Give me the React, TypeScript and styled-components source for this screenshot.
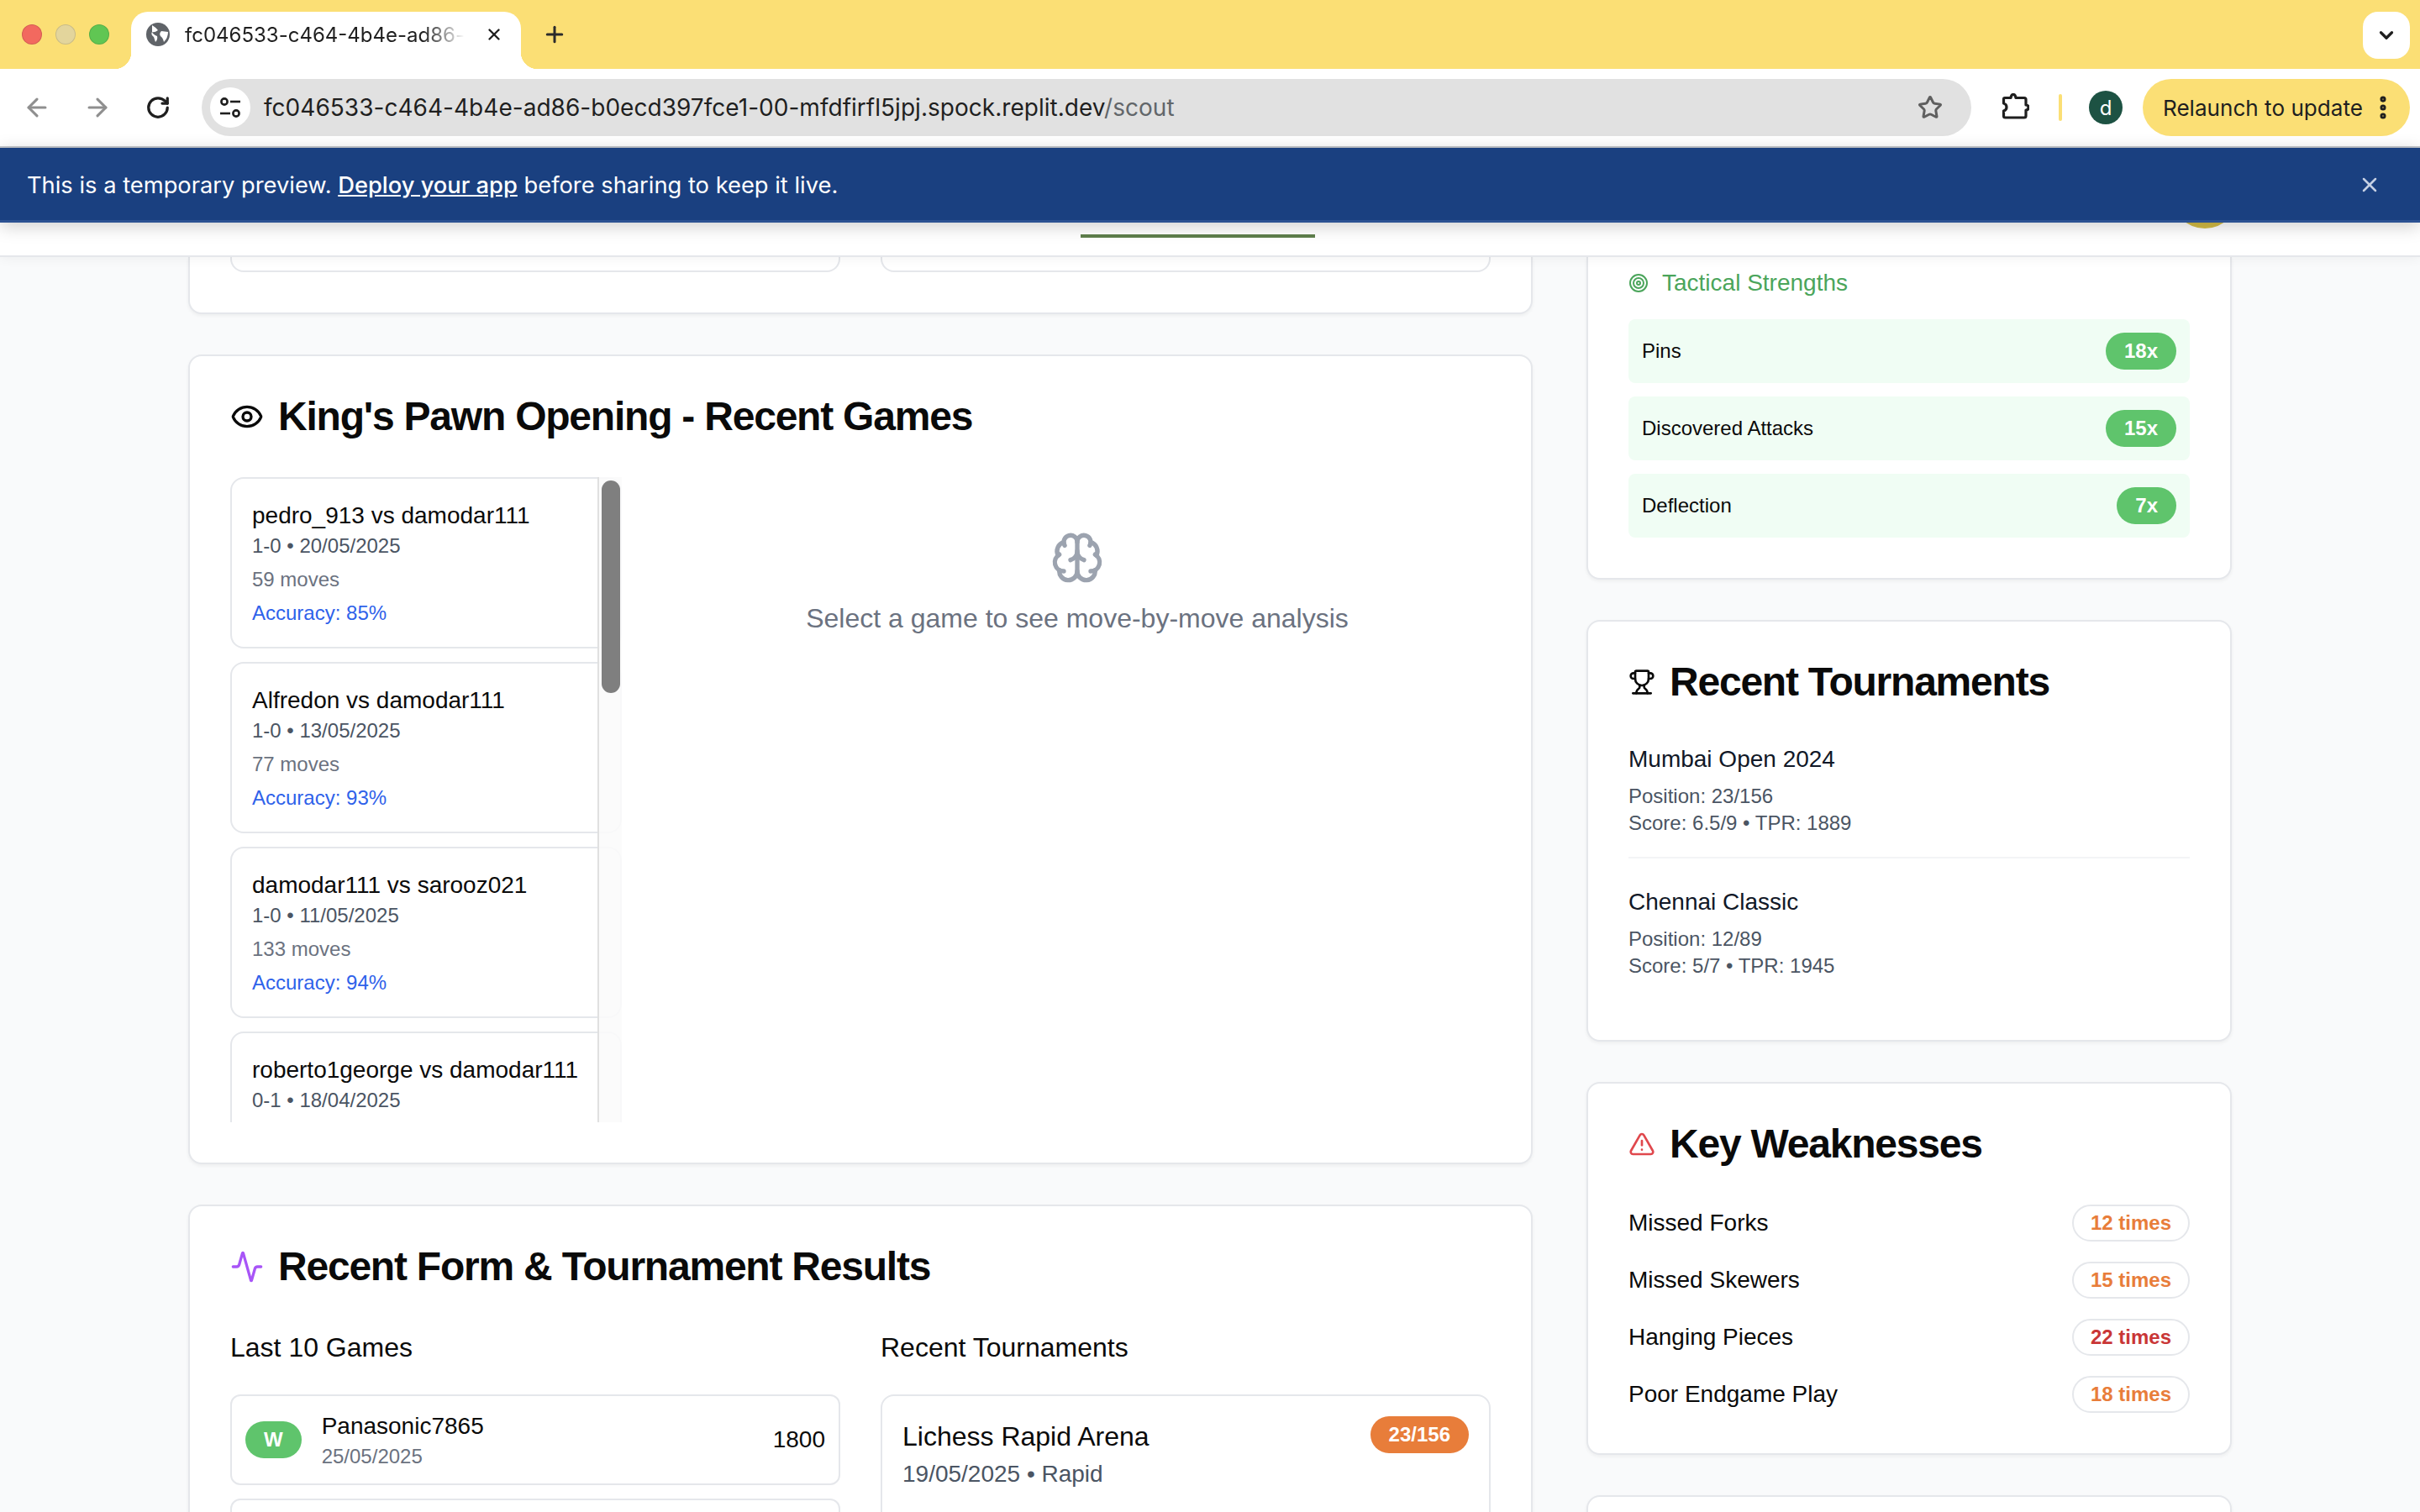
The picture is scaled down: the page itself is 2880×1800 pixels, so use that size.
import * as React from 'react';
import styled, { createGlobalStyle } from 'styled-components';
import {
  Activity,
  ArrowLeft,
  ArrowRight,
  Brain,
  ChevronDown,
  EllipsisVertical,
  Eye,
  Plus,
  RotateCw,
  Star,
  Target,
  TriangleAlert,
  Trophy,
  X,
} from 'lucide-react';

const GlobalStyle = createGlobalStyle`
  html, body {
    margin: 0;
    padding: 0;
    background: #f9fafb;
    font-family: "Liberation Sans", Arial, sans-serif;
  }
  * { box-sizing: border-box; }
`;

const CHROME_FONT = `Inter, "Liberation Sans", sans-serif`;

const Shell = styled.div`
  display: flex;
  flex-direction: column;
  width: 2880px;
  height: 1800px;
  overflow: hidden;
  background: #f9fafb;
  color: #0a0a0a;
`;

/* ---- browser chrome ---- */

const TabStrip = styled.div`
  display: flex;
  flex: 0 0 82px;
  background: #fbdf75;
  padding: 0 12px 0 26px;
`;

const Lights = styled.div`
  display: flex;
  align-items: center;
  gap: 16px;
`;

const Light = styled.span<{ $color: string }>`
  width: 24px;
  height: 24px;
  border-radius: 50%;
  background: ${(p) => p.$color};
  border: 1px solid rgba(0, 0, 0, 0.12);
`;

const Tab = styled.div`
  position: relative;
  display: flex;
  align-items: center;
  align-self: flex-end;
  width: 464px;
  height: 68px;
  margin-left: 26px;
  padding: 0 21px 14px 18px;
  background: #fff;
  border-radius: 20px 20px 0 0;
  font-family: ${CHROME_FONT};

  &::before,
  &::after {
    content: '';
    position: absolute;
    bottom: 0;
    width: 20px;
    height: 20px;
  }
  &::before {
    left: -20px;
    background: radial-gradient(circle at 0 0, transparent 20px, #fff 20.5px);
  }
  &::after {
    right: -20px;
    background: radial-gradient(circle at 100% 0, transparent 20px, #fff 20.5px);
  }
`;

const TabTitle = styled.span`
  flex: 1;
  margin: 0 24px 0 18px;
  overflow: hidden;
  white-space: nowrap;
  font-size: 24px;
  color: #1f1f1f;
  -webkit-mask-image: linear-gradient(to right, #000 85%, transparent 100%);
  mask-image: linear-gradient(to right, #000 85%, transparent 100%);
`;

const NewTab = styled.div`
  display: flex;
  align-items: center;
  margin-left: 25px;
  color: #2b2b2b;
`;

const TabSearch = styled.div`
  display: flex;
  align-items: center;
  justify-content: center;
  width: 56px;
  height: 56px;
  margin: 14px 0 0 auto;
  background: #fff;
  border-radius: 18px;
  color: #1f1f1f;
`;

const Toolbar = styled.div`
  display: flex;
  align-items: center;
  flex: 0 0 94px;
  padding: 0 12px 0 24px;
  background: #fff;
  border-bottom: 2px solid #c4c7cc;
  font-family: ${CHROME_FONT};
`;

const NavButton = styled.div<{ $dim?: boolean; $gap?: number }>`
  display: flex;
  align-items: center;
  justify-content: center;
  width: 40px;
  height: 40px;
  margin-left: ${(p) => p.$gap ?? 0}px;
  color: ${(p) => (p.$dim ? '#8f8f8f' : '#1f1f1f')};
`;

const Omnibox = styled.div`
  display: flex;
  align-items: center;
  flex: 0 0 2106px;
  height: 68px;
  margin-left: 32px;
  padding: 0 34px 0 10px;
  background: #e1e1e1;
  border-radius: 34px;
`;

const SiteInfo = styled.div`
  display: flex;
  align-items: center;
  justify-content: center;
  width: 48px;
  height: 48px;
  border-radius: 50%;
  background: #fff;
`;

const UrlText = styled.span`
  margin-left: 16px;
  font-size: 28px;
  letter-spacing: 0.03px;
  color: #1f1f1f;
  white-space: nowrap;
`;

const UrlPath = styled.span`
  color: #62666a;
`;

const StarWrap = styled.div`
  display: flex;
  margin-left: auto;
  color: #5f5f5f;
`;

const Separator = styled.div`
  width: 4px;
  height: 32px;
  margin-left: 32px;
  border-radius: 2px;
  background: #fbdf75;
`;

const ProfileAvatar = styled.div`
  display: flex;
  align-items: center;
  justify-content: center;
  width: 40px;
  height: 40px;
  margin-left: 32px;
  border-radius: 50%;
  background: #1d5243;
  color: #fff;
  font-size: 24px;
`;

const Relaunch = styled.div`
  display: flex;
  align-items: center;
  justify-content: space-between;
  width: 318px;
  height: 68px;
  margin-left: 24px;
  padding: 0 15px 0 24px;
  background: #fbdf75;
  border-radius: 34px;
  font-size: 26.1px;
  color: #1f1f1f;
  white-space: nowrap;
`;

const Banner = styled.div`
  position: relative;
  z-index: 3;
  display: flex;
  align-items: center;
  justify-content: space-between;
  flex: 0 0 89px;
  padding: 2px 46px 0 32px;
  background: #1a4080;
  border-bottom: 3px solid #2b5192;
  box-shadow: 0 4px 20px rgba(0, 0, 0, 0.2);
  color: #fff;
  font-family: ${CHROME_FONT};
  font-size: 27.3px;
`;

const BannerLink = styled.span`
  font-weight: 500;
  text-decoration: underline;
`;

const BannerClose = styled.div`
  display: flex;
  color: #c5d0e3;
`;

/* ---- app header, mostly hidden under the banner ---- */

const AppHeader = styled.div`
  position: relative;
  z-index: 2;
  display: flex;
  flex: 0 0 41px;
  background: #fff;
  border-bottom: 2px solid #e5e7eb;
  box-shadow: 0 2px 14px rgba(0, 0, 0, 0.05);
`;

const NavUnderline = styled.div`
  width: 279px;
  height: 4px;
  margin: 14px 0 0 1286px;
  background: #5f7f4c;
`;

const UserCircle = styled.div`
  width: 80px;
  height: 80px;
  margin: -73px 216px 0 auto;
  border-radius: 50%;
  background: #d4bc45;
`;

/* ---- page ---- */

const Page = styled.div`
  display: grid;
  grid-template-columns: 1600px 768px;
  gap: 64px;
  flex: 1;
  min-height: 0;
  padding: 0 224px;
`;

const Column = styled.div`
  display: flex;
  flex-direction: column;
  gap: 48px;
  min-width: 0;
`;

const Card = styled.section<{ $cutTop?: boolean }>`
  flex: none;
  padding: ${(p) => (p.$cutTop ? '0' : '48px')} 48px 48px;
  background: #fff;
  border: 2px solid #e5e7eb;
  border-top-width: ${(p) => (p.$cutTop ? 0 : 2)}px;
  border-radius: ${(p) => (p.$cutTop ? '0 0 16px 16px' : '16px')};
  box-shadow: 0 2px 4px rgba(0, 0, 0, 0.05);
`;

const CardHeading = styled.h2`
  display: flex;
  align-items: center;
  gap: 17px;
  height: 48px;
  margin: 0 0 48px;
  font-size: 48px;
  font-weight: 700;
  line-height: 48px;
  letter-spacing: -1.22px;
  color: #0a0a0a;
`;

const TwoCols = styled.div`
  display: grid;
  grid-template-columns: 726px 726px;
  gap: 48px;
`;

const CutInner = styled.div`
  height: 18px;
  background: #fff;
  border: 2px solid #e5e7eb;
  border-top: 0;
  border-radius: 0 0 16px 16px;
`;

const GamesGrid = styled.div`
  display: flex;
  gap: 48px;
`;

const GameListBox = styled.div`
  position: relative;
  display: flex;
  flex-direction: column;
  gap: 16px;
  flex: 0 0 466px;
  height: 768px;
  overflow: hidden;
`;

const GameItem = styled.div`
  flex: none;
  padding: 24px;
  background: #fff;
  border: 2px solid #e5e7eb;
  border-radius: 16px;
`;

const GameName = styled.div`
  font-size: 28px;
  line-height: 40px;
  white-space: nowrap;
`;

const GameMeta = styled.div`
  font-size: 24px;
  line-height: 32px;
  color: #4b5563;
`;

const GameMoves = styled.div`
  margin-top: 8px;
  font-size: 24px;
  line-height: 32px;
  color: #6b7280;
`;

const GameAccuracy = styled.div`
  margin-top: 8px;
  font-size: 24px;
  line-height: 32px;
  color: #2f62ea;
`;

const ScrollTrack = styled.div`
  position: absolute;
  top: 0;
  right: 0;
  bottom: 0;
  width: 29px;
  padding: 4px 2px 0 3px;
  background: rgba(250, 250, 250, 0.88);
  border-left: 2px solid #e0e0e0;
`;

const ScrollThumb = styled.div`
  height: 253px;
  border-radius: 11px;
  background: #7f7f7f;
`;

const AnalysisEmpty = styled.div`
  display: flex;
  flex-direction: column;
  align-items: center;
  flex: 1;
  padding: 64px 0 0 2px;
  color: #9ca3af;
`;

const AnalysisText = styled.div`
  margin-top: 16px;
  font-size: 32px;
  line-height: 48px;
  color: #6b7280;
`;

const SubTitle = styled.div`
  margin-bottom: 32px;
  font-size: 32px;
  line-height: 48px;
`;

const FormRow = styled.div`
  display: flex;
  align-items: center;
  gap: 24px;
  margin-bottom: 16px;
  padding: 16px;
  background: #fff;
  border: 2px solid #e5e7eb;
  border-radius: 12px;
`;

const FormInfo = styled.div`
  flex: 1;
`;

const FormName = styled.div`
  font-size: 28px;
  line-height: 40px;
`;

const FormDate = styled.div`
  font-size: 24px;
  line-height: 32px;
  color: #6b7280;
`;

const FormRating = styled.div`
  font-size: 28px;
  line-height: 40px;
`;

const Pill = styled.span<{ $bg?: string; $color?: string; $outlined?: boolean }>`
  display: inline-flex;
  align-items: center;
  flex: none;
  height: 44px;
  padding: 0 20px;
  border: 2px solid ${(p) => (p.$outlined ? '#e5e7eb' : 'transparent')};
  border-radius: 22px;
  background: ${(p) => p.$bg ?? 'transparent'};
  color: ${(p) => p.$color ?? '#fff'};
  font-size: 24px;
  font-weight: 700;
  white-space: nowrap;
`;

const EventCard = styled.div`
  padding: 24px;
  height: 400px;
  background: #fff;
  border: 2px solid #e5e7eb;
  border-radius: 16px;
`;

const EventTop = styled.div`
  display: flex;
  align-items: flex-start;
  justify-content: space-between;
`;

const EventName = styled.div`
  font-size: 32px;
  line-height: 48px;
`;

const EventSub = styled.div`
  margin-top: 1px;
  font-size: 28px;
  line-height: 40px;
  color: #4b5563;
`;

const EventScore = styled.div`
  margin-top: 19px;
  font-size: 24px;
  line-height: 32px;
  color: #6b7280;
`;

const StrengthTitle = styled.div`
  display: flex;
  align-items: center;
  gap: 16px;
  margin: 11px 0 23px;
  font-size: 28px;
  line-height: 40px;
  color: #4ba55b;
`;

const StrengthList = styled.div`
  display: flex;
  flex-direction: column;
  gap: 16px;
`;

const StrengthRow = styled.div`
  display: flex;
  align-items: center;
  justify-content: space-between;
  height: 76px;
  padding: 0 16px;
  background: #f0fdf4;
  border-radius: 8px;
  font-size: 24px;
`;

const TourItem = styled.div<{ $last?: boolean }>`
  padding-bottom: 24px;
  margin-bottom: ${(p) => (p.$last ? 0 : 32)}px;
  border-bottom: ${(p) => (p.$last ? '0' : '2px solid #f3f4f6')};
`;

const TourName = styled.div`
  margin-bottom: 8px;
  font-size: 28px;
  line-height: 40px;
  color: #111827;
`;

const TourLine = styled.div`
  font-size: 24px;
  line-height: 32px;
  color: #4b5563;
`;

const WeakList = styled.div`
  display: flex;
  flex-direction: column;
  gap: 24px;
`;

const WeakRow = styled.div`
  display: flex;
  align-items: center;
  justify-content: space-between;
  font-size: 28px;
`;

const NextCard = styled(Card)`
  min-height: 100px;
`;

/* ---- small drawings with no icon in the packages ---- */

const FaviconGlobe = () => (
  <svg width="28" height="28" viewBox="0 0 28 28">
    <circle cx="14" cy="14" r="14" fill="#5f6368" />
    <path d="M7 3 Q12 6 14 9 Q10 12 7 11 Q5 14 9 17 L11 23 Q14 20 13 16 Q8 14 7 11 Z" fill="#fff" />
    <path d="M18 10 L26 11 Q26 18 21 23 Q20 18 17 16 Q15 13 18 10 Z" fill="#fff" />
  </svg>
);

const SiteControls = () => (
  <svg width="28" height="28" viewBox="0 0 28 28" fill="none" stroke="#1f1f1f" strokeWidth="2.6">
    <circle cx="7" cy="7" r="3.6" />
    <path d="M14 7h12" />
    <path d="M2 21h12" />
    <circle cx="21" cy="21" r="3.6" />
  </svg>
);

const ExtensionPiece = () => (
  <svg width="34" height="34" viewBox="0 0 34 34" fill="none" stroke="#1f1f1f" strokeWidth="3.2" strokeLinejoin="round">
    <path d="M5 5.5 H12 Q12.5 1.5 15 1.5 Q17.5 1.5 18 5.5 H28 Q30 5.5 30 7.5 V14 Q33 14 33 17 Q33 20 30 20 V27 Q30 29 28 29 H5.5 Q3.5 29 3.5 27 V21 Q7 20 7 16.5 Q7 13 3.5 12 V7 Q3.5 5.5 5 5.5 Z" />
  </svg>
);

interface Game { name: string; meta: string; moves: string; accuracy: string }

const games: Game[] = [
  { name: 'pedro_913 vs damodar111', meta: '1-0 • 20/05/2025', moves: '59 moves', accuracy: 'Accuracy: 85%' },
  { name: 'Alfredon vs damodar111', meta: '1-0 • 13/05/2025', moves: '77 moves', accuracy: 'Accuracy: 93%' },
  { name: 'damodar111 vs sarooz021', meta: '1-0 • 11/05/2025', moves: '133 moves', accuracy: 'Accuracy: 94%' },
  { name: 'roberto1george vs damodar111', meta: '0-1 • 18/04/2025', moves: '41 moves', accuracy: 'Accuracy: 88%' },
];

const strengths = [
  { label: 'Pins', count: '18x' },
  { label: 'Discovered Attacks', count: '15x' },
  { label: 'Deflection', count: '7x' },
];

const weaknesses = [
  { label: 'Missed Forks', count: '12 times', color: '#e87d3a' },
  { label: 'Missed Skewers', count: '15 times', color: '#e87d3a' },
  { label: 'Hanging Pieces', count: '22 times', color: '#c93636' },
  { label: 'Poor Endgame Play', count: '18 times', color: '#e87d3a' },
];

const App: React.FunctionComponent = () => {
  return (
    <Shell>
      <GlobalStyle />

      <TabStrip>
        <Lights>
          <Light $color="#f2695f" />
          <Light $color="#e3d59c" />
          <Light $color="#60c653" />
        </Lights>
        <Tab>
          <FaviconGlobe />
          <TabTitle>fc046533-c464-4b4e-ad86-b0ecd397fce1</TabTitle>
          <X size={22} color="#1f1f1f" strokeWidth={2.6} />
        </Tab>
        <NewTab>
          <Plus size={30} strokeWidth={2.4} />
        </NewTab>
        <TabSearch>
          <ChevronDown size={26} strokeWidth={3} />
        </TabSearch>
      </TabStrip>

      <Toolbar>
        <NavButton $dim>
          <ArrowLeft size={34} strokeWidth={2.2} />
        </NavButton>
        <NavButton $dim $gap={32}>
          <ArrowRight size={34} strokeWidth={2.2} />
        </NavButton>
        <NavButton $gap={32}>
          <RotateCw size={30} strokeWidth={2.6} />
        </NavButton>
        <Omnibox>
          <SiteInfo>
            <SiteControls />
          </SiteInfo>
          <UrlText>
            fc046533-c464-4b4e-ad86-b0ecd397fce1-00-mfdfirfl5jpj.spock.replit.dev<UrlPath>/scout</UrlPath>
          </UrlText>
          <StarWrap>
            <Star size={30} strokeWidth={2.4} />
          </StarWrap>
        </Omnibox>
        <NavButton $gap={32}>
          <ExtensionPiece />
        </NavButton>
        <Separator />
        <ProfileAvatar>d</ProfileAvatar>
        <Relaunch>
          Relaunch to update
          <EllipsisVertical size={34} strokeWidth={3} />
        </Relaunch>
      </Toolbar>

      <Banner>
        <span>
          This is a temporary preview. <BannerLink>Deploy your app</BannerLink> before sharing to keep it live.
        </span>
        <BannerClose>
          <X size={28} strokeWidth={2.2} />
        </BannerClose>
      </Banner>

      <AppHeader>
        <NavUnderline />
        <UserCircle />
      </AppHeader>

      <Page>
        <Column>
          <Card $cutTop>
            <TwoCols>
              <CutInner />
              <CutInner />
            </TwoCols>
          </Card>

          <Card>
            <CardHeading>
              <Eye size={40} />
              King's Pawn Opening - Recent Games
            </CardHeading>
            <GamesGrid>
              <GameListBox>
                {games.map((g) => (
                  <GameItem key={g.name}>
                    <GameName>{g.name}</GameName>
                    <GameMeta>{g.meta}</GameMeta>
                    <GameMoves>{g.moves}</GameMoves>
                    <GameAccuracy>{g.accuracy}</GameAccuracy>
                  </GameItem>
                ))}
                <ScrollTrack>
                  <ScrollThumb />
                </ScrollTrack>
              </GameListBox>
              <AnalysisEmpty>
                <Brain size={64} />
                <AnalysisText>Select a game to see move-by-move analysis</AnalysisText>
              </AnalysisEmpty>
            </GamesGrid>
          </Card>

          <Card>
            <CardHeading>
              <Activity size={40} color="#a855f7" />
              Recent Form &amp; Tournament Results
            </CardHeading>
            <TwoCols>
              <div>
                <SubTitle>Last 10 Games</SubTitle>
                <FormRow>
                  <Pill $bg="#5fc46c">W</Pill>
                  <FormInfo>
                    <FormName>Panasonic7865</FormName>
                    <FormDate>25/05/2025</FormDate>
                  </FormInfo>
                  <FormRating>1800</FormRating>
                </FormRow>
                <FormRow>
                  <Pill $bg="#5fc46c">W</Pill>
                  <FormInfo>
                    <FormName>pedro_913</FormName>
                    <FormDate>20/05/2025</FormDate>
                  </FormInfo>
                  <FormRating>1785</FormRating>
                </FormRow>
              </div>
              <div>
                <SubTitle>Recent Tournaments</SubTitle>
                <EventCard>
                  <EventTop>
                    <EventName>Lichess Rapid Arena</EventName>
                    <Pill $bg="#e87d3a">23/156</Pill>
                  </EventTop>
                  <EventSub>19/05/2025 • Rapid</EventSub>
                  <EventScore>Score: 6.5/9</EventScore>
                </EventCard>
              </div>
            </TwoCols>
          </Card>
        </Column>

        <Column>
          <Card $cutTop>
            <StrengthTitle>
              <Target size={24} />
              Tactical Strengths
            </StrengthTitle>
            <StrengthList>
              {strengths.map((s) => (
                <StrengthRow key={s.label}>
                  {s.label}
                  <Pill $bg="#5fc46c">{s.count}</Pill>
                </StrengthRow>
              ))}
            </StrengthList>
          </Card>

          <Card>
            <CardHeading>
              <Trophy size={32} />
              Recent Tournaments
            </CardHeading>
            <TourItem>
              <TourName>Mumbai Open 2024</TourName>
              <TourLine>Position: 23/156</TourLine>
              <TourLine>Score: 6.5/9 • TPR: 1889</TourLine>
            </TourItem>
            <TourItem $last>
              <TourName>Chennai Classic</TourName>
              <TourLine>Position: 12/89</TourLine>
              <TourLine>Score: 5/7 • TPR: 1945</TourLine>
            </TourItem>
          </Card>

          <Card>
            <CardHeading>
              <TriangleAlert size={32} color="#e0484d" />
              Key Weaknesses
            </CardHeading>
            <WeakList>
              {weaknesses.map((w) => (
                <WeakRow key={w.label}>
                  {w.label}
                  <Pill $outlined $color={w.color}>{w.count}</Pill>
                </WeakRow>
              ))}
            </WeakList>
          </Card>

          <NextCard />
        </Column>
      </Page>
    </Shell>
  );
};

export default App;
